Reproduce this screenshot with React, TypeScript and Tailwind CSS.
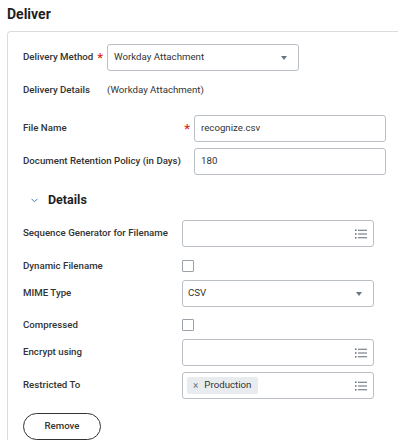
import React from "react";

function ListIcon() {
  return (
    <svg width="12" height="10" viewBox="0 0 12 10" className="text-[#5f6b77]">
      <rect x="0" y="0.5" width="1.5" height="1.5" fill="currentColor" />
      <rect x="0" y="4.25" width="1.5" height="1.5" fill="currentColor" />
      <rect x="0" y="8" width="1.5" height="1.5" fill="currentColor" />
      <rect x="3" y="0.75" width="9" height="1" fill="currentColor" />
      <rect x="3" y="4.5" width="9" height="1" fill="currentColor" />
      <rect x="3" y="8.25" width="9" height="1" fill="currentColor" />
    </svg>
  );
}

function Caret() {
  return (
    <svg width="6" height="4" viewBox="0 0 6 4" className="mr-[5px]">
      <path d="M0 0h6L3 4z" fill="#6b757f" />
    </svg>
  );
}

function Star() {
  return <span className="text-[13px] leading-none text-[#de2e21]">*</span>;
}

function Field({ children, right }: { children?: React.ReactNode; right?: React.ReactNode }) {
  return (
    <div className="flex h-[27px] w-[192px] items-center justify-between rounded-[3px] border border-[#b9bfc4] px-[6px]">
      <div className="flex items-center">{children}</div>
      {right}
    </div>
  );
}

function Checkbox() {
  return <div className="h-[12px] w-[12px] rounded-[1px] border border-[#9aa1a8]" />;
}

function Row({ label, mt, children }: { label: string; mt: string; children: React.ReactNode }) {
  return (
    <div className={`flex items-center ${mt}`}>
      <div className="w-[159px] font-medium">{label}</div>
      {children}
    </div>
  );
}

export default function App() {
  return (
    <div className="h-[442px] w-[398px] overflow-hidden bg-white font-['Roboto',sans-serif] text-[9.7px] text-[#333]">
      <h1 className="pl-[7px] pt-[5px] text-[14px] font-bold leading-[18px] text-[#1f1f1f]">Deliver</h1>
      <div className="ml-[7px] mt-[8px] w-[400px] rounded-tl-[4px] border-l border-t border-[#dadde0] pl-[15px] pt-[12px]">
        <div className="flex h-[27px] items-center">
          <div className="flex w-[84px] items-center font-medium">
            Delivery Method
            <span className="ml-[4px] mt-[3px]">
              <Star />
            </span>
          </div>
          <Field right={<Caret />}>
            <span>Workday Attachment</span>
          </Field>
        </div>
        <div className="mt-[11px] flex h-[16px] items-center">
          <div className="w-[84px] font-medium">Delivery Details</div>
          <span>(Workday Attachment)</span>
        </div>

        <div className="mt-[17px] flex items-center">
          <div className="flex w-[171px] items-center justify-between pr-[4px] font-medium">
            File Name
            <span className="mt-[3px]">
              <Star />
            </span>
          </div>
          <Field>
            <span>recognize.csv</span>
          </Field>
        </div>
        <div className="mt-[6px] flex items-center">
          <div className="w-[171px] font-medium">Document Retention Policy (in Days)</div>
          <Field>
            <span>180</span>
          </Field>
        </div>

        <div className="mt-[15px] flex h-[20px] items-center">
          <svg width="7" height="5" viewBox="0 0 7 5" className="ml-[8px]">
            <path d="M0.5 0.8L3.5 3.8L6.5 0.8" fill="none" stroke="#3b7fd0" strokeWidth="1" />
          </svg>
          <span className="ml-[10px] text-[12.5px] font-bold text-[#1f1f1f]">Details</span>
        </div>

        <Row label="Sequence Generator for Filename" mt="mt-[10px]">
          <Field right={<ListIcon />} />
        </Row>
        <Row label="Dynamic Filename" mt="mt-[13px] h-[12px]">
          <Checkbox />
        </Row>
        <Row label="MIME Type" mt="mt-[8px]">
          <div className="w-[191px]">
            <Field right={<Caret />}>
              <span className="-ml-[1px]">CSV</span>
            </Field>
          </div>
        </Row>
        <Row label="Compressed" mt="mt-[12px] h-[12px]">
          <Checkbox />
        </Row>
        <Row label="Encrypt using" mt="mt-[8px]">
          <Field right={<ListIcon />} />
        </Row>
        <Row label="Restricted To" mt="mt-[6px]">
          <Field right={<ListIcon />}>
            <span className="-ml-[2px] flex h-[17px] w-[71px] items-center rounded-[2px] bg-[#e9ecee] px-[6px]">
              <span className="mr-[6px] text-[10px] text-[#6b7580]">×</span>
              Production
            </span>
          </Field>
        </Row>

        <button className="mt-[14px] h-[27px] w-[78px] rounded-full border border-[#333] text-[9.7px] font-medium">
          Remove
        </button>
      </div>
    </div>
  );
}
